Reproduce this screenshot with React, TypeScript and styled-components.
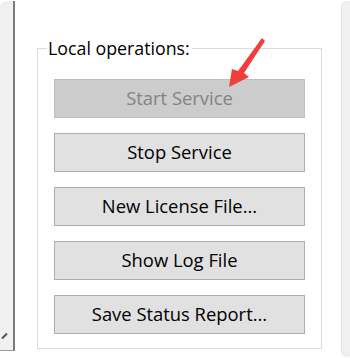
import styled, { createGlobalStyle } from 'styled-components';

const GlobalStyle = createGlobalStyle`
  html, body {
    margin: 0;
    padding: 0;
    background: #ffffff;
  }
  body {
    font-family: "Open Sans", "Noto Sans", sans-serif;
  }
`;

const Screen = styled.div`
  position: relative;
  display: flex;
  width: 350px;
  height: 358px;
  overflow: hidden;
  background: #ffffff;
`;

const SidePane = styled.div`
  position: relative;
  width: 13px;
  height: 349px;
  flex: none;
  margin-top: 1px;
  background: #f0f0f0;
  border-right: 2px solid #7c7c7c;
  border-bottom: 1px solid #9a9a9a;
  border-top-left-radius: 6px;
`;

const Grip = styled.div`
  position: absolute;
  left: 1px;
  bottom: 13px;
  width: 7px;
  height: 2px;
  background: #555555;
  transform: rotate(-45deg);
`;

const Content = styled.div`
  flex: 1;
  padding: 40px 19px 0 22px;
`;

const Group = styled.fieldset`
  margin: 0;
  padding: 23px 16px 14px 16px;
  border: 1px solid #dcdcdc;
  display: flex;
  flex-direction: column;
  gap: 15px;
  box-sizing: border-box;
`;

const Legend = styled.legend`
  margin-left: -7px;
  padding: 0 2px 0 1px;
  font-size: 17.8px;
  line-height: 16px;
  color: #000000;
`;

const ActionButton = styled.button<{ $disabled?: boolean }>`
  height: 39px;
  width: 100%;
  box-sizing: border-box;
  margin: 0;
  padding: 0 0 2px;
  font-family: "Open Sans", "Noto Sans", sans-serif;
  font-size: 18.4px;
  border: 1px solid ${({ $disabled }) => ($disabled ? '#bfbfbf' : '#adadad')};
  background: ${({ $disabled }) => ($disabled ? '#cccccc' : '#e1e1e1')};
  color: ${({ $disabled }) => ($disabled ? '#838383' : '#000000')};
  border-radius: 0;
`;

const RightPane = styled.div`
  width: 9px;
  height: 356px;
  flex: none;
  margin-top: 1px;
  background: #f0f0f0;
  border-left: 1px solid #e4e4e4;
  border-radius: 6px 0 0 6px;
  box-sizing: border-box;
`;

const Arrow = styled.svg`
  position: absolute;
  left: 0;
  top: 0;
  pointer-events: none;
`;

const actions = [
  { label: 'Start Service', disabled: true },
  { label: 'Stop Service' },
  { label: 'New License File...' },
  { label: 'Show Log File' },
  { label: 'Save Status Report...' },
];

export default function App() {
  return (
    <>
      <GlobalStyle />
      <Screen>
        <SidePane>
          <Grip />
        </SidePane>
        <Content>
          <Group>
            <Legend>Local operations:</Legend>
            {actions.map((a) => (
              <ActionButton key={a.label} $disabled={a.disabled}>
                {a.label}
              </ActionButton>
            ))}
          </Group>
        </Content>
        <RightPane />
        <Arrow width="350" height="358" viewBox="0 0 350 358">
          <polygon
            points="262,38 265,41 244,73 249,77 229,87 232,69 238,71"
            fill="#f23d3d"
          />
        </Arrow>
      </Screen>
    </>
  );
}
